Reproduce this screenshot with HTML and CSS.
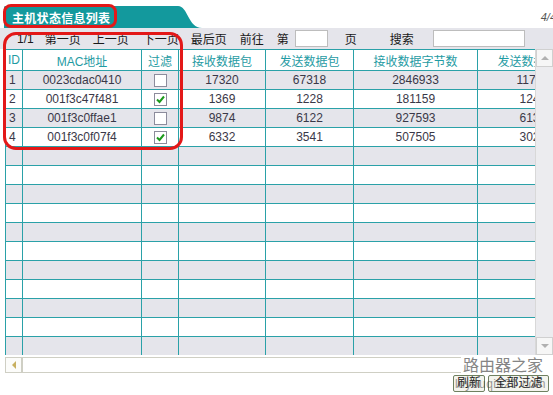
FILE: index.html
```html
<!DOCTYPE html>
<html lang="zh">
<head>
<meta charset="utf-8">
<title>主机状态信息列表</title>
<link rel="stylesheet" href="styles.css">
</head>
<body>
<div class="top">
  <div class="tab">
    <svg class="tab-bg" width="200" height="22" viewBox="0 0 200 22"><path d="M0 1 Q0 0 2 0 H174 C184 0 184 22 198 22 H0 Z" fill="#13999d"/></svg>
    <span class="tab-title">主机状态信息列表</span>
  </div>
  <div class="pageno">4/4</div>
</div>
<div class="toolbar">
  <span class="t t-pages">1/1</span>
  <span class="t t-first">第一页</span>
  <span class="t t-prev">上一页</span>
  <span class="t t-next">下一页</span>
  <span class="t t-last">最后页</span>
  <span class="t t-go">前往</span>
  <span class="t t-di">第</span>
  <span class="inp inp-page"></span>
  <span class="t t-ye">页</span>
  <span class="t t-search">搜索</span>
  <span class="inp inp-search"></span>
</div>
<div class="gridarea">
  <div class="gridclip">
    <table class="grid">
      <colgroup><col class="c-id"><col class="c-mac"><col class="c-flt"><col class="c-n1"><col class="c-n2"><col class="c-n3"><col class="c-n4"></colgroup>
      <thead>
        <tr><th>ID</th><th>MAC地址</th><th>过滤</th><th>接收数据包</th><th>发送数据包</th><th>接收数据字节数</th><th>发送数据字节数</th></tr>
      </thead>
      <tbody>
        <tr><td class="id">1</td><td>0023cdac0410</td><td><span class="cb"></span></td><td>17320</td><td>67318</td><td>2846933</td><td>1174521</td></tr>
        <tr><td class="id">2</td><td>001f3c47f481</td><td><span class="cb"><svg width="11" height="11" viewBox="0 0 11 11"><path d="M2 5.5 L4.5 8 L9 2.5" fill="none" stroke="#1c9a1c" stroke-width="2"/></svg></span></td><td>1369</td><td>1228</td><td>181159</td><td>124688</td></tr>
        <tr><td class="id">3</td><td>001f3c0ffae1</td><td><span class="cb"></span></td><td>9874</td><td>6122</td><td>927593</td><td>613270</td></tr>
        <tr><td class="id">4</td><td>001f3c0f07f4</td><td><span class="cb"><svg width="11" height="11" viewBox="0 0 11 11"><path d="M2 5.5 L4.5 8 L9 2.5" fill="none" stroke="#1c9a1c" stroke-width="2"/></svg></span></td><td>6332</td><td>3541</td><td>507505</td><td>302417</td></tr>
        <tr><td></td><td></td><td></td><td></td><td></td><td></td><td></td></tr>
        <tr><td></td><td></td><td></td><td></td><td></td><td></td><td></td></tr>
        <tr><td></td><td></td><td></td><td></td><td></td><td></td><td></td></tr>
        <tr><td></td><td></td><td></td><td></td><td></td><td></td><td></td></tr>
        <tr><td></td><td></td><td></td><td></td><td></td><td></td><td></td></tr>
        <tr><td></td><td></td><td></td><td></td><td></td><td></td><td></td></tr>
        <tr><td></td><td></td><td></td><td></td><td></td><td></td><td></td></tr>
        <tr><td></td><td></td><td></td><td></td><td></td><td></td><td></td></tr>
        <tr><td></td><td></td><td></td><td></td><td></td><td></td><td></td></tr>
        <tr><td></td><td></td><td></td><td></td><td></td><td></td><td></td></tr>
        <tr><td></td><td></td><td></td><td></td><td></td><td></td><td></td></tr>
      </tbody>
    </table>
  </div>
  <div class="vscroll">
    <div class="sbtn"><span class="tri tri-up"></span></div>
    <div class="strack"></div>
    <div class="sbtn"><span class="tri tri-down"></span></div>
  </div>
</div>
<div class="hscroll">
  <div class="hbtn"><span class="tri tri-left"></span></div>
  <div class="htrack"></div>
</div>
<div class="bottom">
  <button class="btn btn-refresh">刷新</button>
  <button class="btn btn-all">全部过滤</button>
</div>
<div class="watermark">路由器之家</div>
<div class="watermark2">luyouqi520.com</div>
<div class="mark mark-title"></div>
<div class="mark mark-table"></div>
</body>
</html>
```
FILE: styles.css
```css
* { box-sizing: border-box; }
html, body { margin: 0; padding: 0; background: #fff; }
body {
  width: 553px;
  height: 395px;
  overflow: hidden;
  position: relative;
  font-family: "Liberation Sans", "Noto Sans CJK SC", sans-serif;
  font-size: 12px;
  color: #222;
}
.top {
  height: 28px;
  display: flex;
  align-items: flex-start;
}
.tab {
  position: relative;
  margin-left: 4px;
  margin-top: 6px;
  width: 200px;
  height: 22px;
  display: flex;
  align-items: center;
}
.tab-bg { position: absolute; left: 0; top: 0; }
.tab-title {
  position: relative;
  margin-left: 8px;
  color: #fff;
  font-weight: bold;
  font-size: 12px;
  letter-spacing: 0.3px;
}
.pageno {
  margin-left: auto;
  margin-top: 11px;
  margin-right: -3px;
  font-size: 11px;
  font-style: italic;
  color: #555;
}
.toolbar {
  height: 21px;
  background: #e5e5eb;
  display: flex;
  align-items: center;
  color: #1a1a1a;
}
.t { white-space: nowrap; }
.t-pages { margin-left: 17px; }
.t-first { margin-left: 11px; }
.t-prev { margin-left: 12px; }
.t-next { margin-left: 14px; }
.t-last { margin-left: 12px; }
.t-go { margin-left: 13px; }
.t-di { margin-left: 13px; }
.inp {
  display: block;
  height: 17px;
  background: #fff;
  border: 1px solid #bdbdbd;
}
.inp-page { margin-left: 6px; width: 33px; }
.t-ye { margin-left: 17px; }
.t-search { margin-left: 33px; }
.inp-search { margin-left: 19px; width: 92px; }

.gridarea {
  display: flex;
  height: 306px;
}
.gridclip {
  margin-left: 5px;
  width: 530px;
  height: 306px;
  overflow: hidden;
}
.grid {
  table-layout: fixed;
  border-collapse: collapse;
  width: 597px;
}
.c-id { width: 17px; }
.c-mac { width: 119px; }
.c-flt { width: 37px; }
.c-n1 { width: 87px; }
.c-n2 { width: 88px; }
.c-n3 { width: 124px; }
.c-n4 { width: 124px; }
.grid th, .grid td {
  border: 1px solid #2aa1a8;
  padding: 0;
  text-align: center;
  white-space: nowrap;
  overflow: hidden;
}
.grid th {
  height: 21px;
  font-weight: normal;
  color: #1f9ba3;
  background: #fff;
}
.grid td {
  height: 19px;
  color: #3a3848;
}
.grid tbody tr:nth-child(odd) td { background: #e5e5eb; }
.grid tbody tr:nth-child(even) td { background: #fff; }
.grid td.id { text-align: left; padding-left: 3px; }
.cb {
  display: inline-flex;
  align-items: center;
  justify-content: center;
  width: 13px;
  height: 13px;
  border: 1px solid #8c8c9c;
  background: #fff;
  vertical-align: middle;
}
.vscroll {
  width: 18px;
  height: 306px;
  display: flex;
  flex-direction: column;
  background: #ececef;
  border-left: 1px solid #d8d8d8;
}
.sbtn {
  height: 18px;
  display: flex;
  align-items: center;
  justify-content: center;
  background: #f6f6f6;
  border: 1px solid #d0d0d0;
}
.strack { flex: 1; }
.tri { width: 0; height: 0; display: block; }
.tri-up { border-left: 4px solid transparent; border-right: 4px solid transparent; border-bottom: 4px solid #b0b0b0; }
.tri-down { border-left: 4px solid transparent; border-right: 4px solid transparent; border-top: 4px solid #b0b0b0; }
.tri-left { border-top: 4px solid transparent; border-bottom: 4px solid transparent; border-right: 4px solid #c8b060; }
.hscroll {
  margin-top: 2px;
  margin-left: 5px;
  width: 530px;
  height: 16px;
  display: flex;
  border: 1px solid #cfcfc4;
}
.hbtn {
  width: 17px;
  display: flex;
  align-items: center;
  justify-content: center;
  border-right: 2px solid #cfcfc4;
  background: #fcfcfa;
}
.htrack { flex: 1; background: #fff; }
.bottom {
  display: flex;
  justify-content: flex-end;
  gap: 3px;
  margin-top: 2px;
  padding-right: 4px;
}
.btn {
  height: 17px;
  padding: 0 2px;
  margin: 0;
  font-family: "Liberation Sans", "Noto Sans CJK SC", sans-serif;
  font-size: 12px;
  line-height: 15px;
  color: #222;
  background: #f4f4ee;
  border: 1px solid #6f8060;
  border-radius: 2px;
}
.btn-refresh { width: 32px; }
.btn-all { width: 61px; }
.watermark {
  position: absolute;
  left: 461px;
  top: 355px;
  font-family: "Noto Sans CJK SC", sans-serif;
  font-size: 16px;
  line-height: 18px;
  color: #858585;
  background: #fff;
  padding: 0 2px;
}
.watermark2 {
  position: absolute;
  left: 455px;
  top: 377px;
  font-size: 12px;
  color: rgba(70, 70, 70, 0.55);
  letter-spacing: 0.5px;
}
.mark {
  position: absolute;
  border: 3px solid #e31818;
  pointer-events: none;
}
.mark-title {
  left: 3px;
  top: 4px;
  width: 114px;
  height: 24px;
  border-radius: 8px;
}
.mark-table {
  left: 3px;
  top: 32px;
  width: 180px;
  height: 118px;
  border-radius: 13px;
}
```
